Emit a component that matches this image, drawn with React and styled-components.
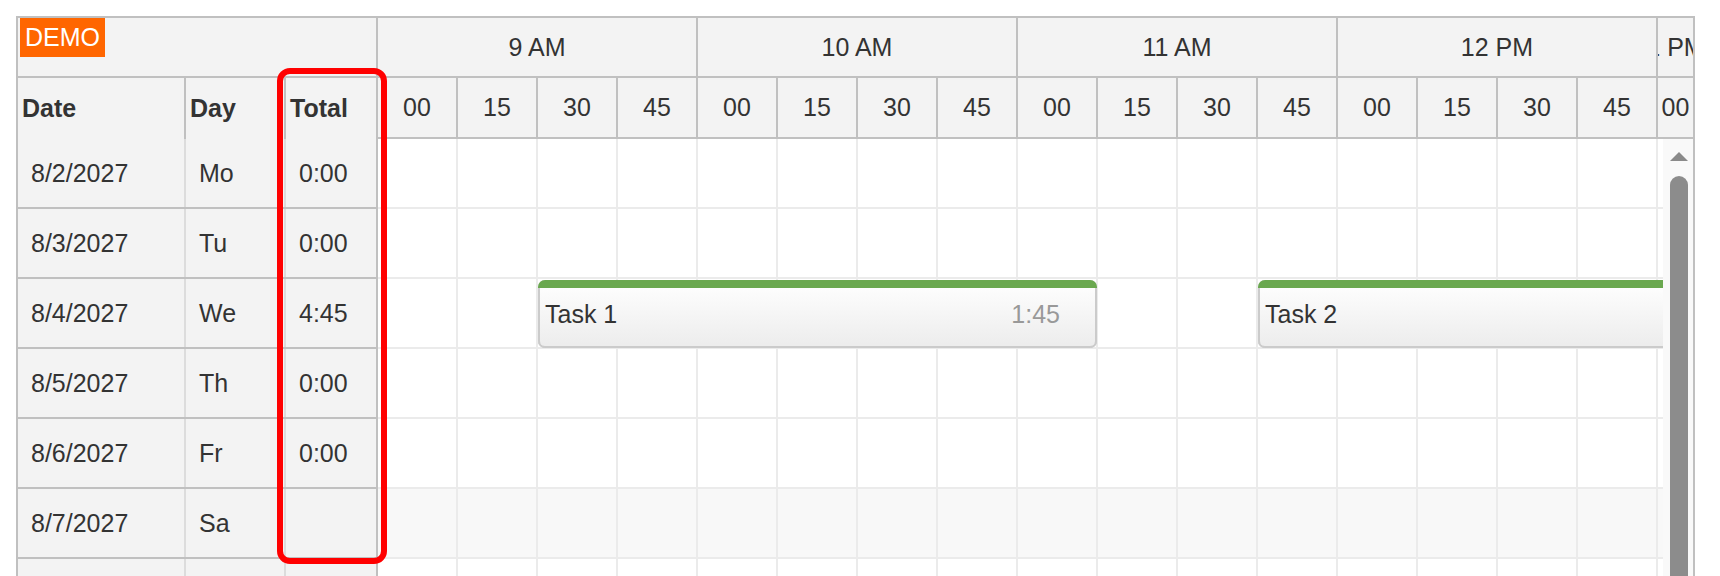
import React from 'react'
import styled, { createGlobalStyle } from 'styled-components'

const GlobalStyle = createGlobalStyle`
  html, body {
    margin: 0;
    padding: 0;
    overflow: hidden;
    background: #fff;
  }
  body {
    font-family: "Liberation Sans", Arial, sans-serif;
    color: #333;
  }
  #root {
    padding: 16px;
  }
`;

const CELL = 80;
const PX_PER_MIN = CELL / 15;

const Scheduler = styled.div`
  position: relative;
  box-sizing: border-box;
  width: 1679px;
  height: 640px;
  border: 2px solid #c0c0c0;
  display: grid;
  grid-template-columns: 360px 1fr;
  grid-template-rows: 121px 1fr;
  font-size: 25px;
  background: #fff;
  overflow: hidden;
`;

const Corner = styled.div`
  display: flex;
  flex-direction: column;
  background: #f3f3f3;
  border-right: 2px solid #c0c0c0;
`;

const CornerTop = styled.div`
  box-sizing: border-box;
  height: 60px;
  padding: 0 2px;
  border-bottom: 2px solid #c0c0c0;
`;

const Demo = styled.span`
  display: inline-block;
  height: 39px;
  line-height: 39px;
  padding: 0 5px;
  background: #ff6600;
  color: #fff;
`;

const ColumnHeads = styled.div`
  display: flex;
  flex: 1;
`;

const ColumnHead = styled.div`
  box-sizing: border-box;
  width: ${p => p.$w}px;
  display: flex;
  align-items: center;
  padding-left: 4px;
  font-weight: bold;
  border-right: ${p => (p.$last ? 'none' : '2px solid #c0c0c0')};
`;

const TimeHeader = styled.div`
  display: flex;
  flex-direction: column;
  background: #f3f3f3;
  overflow: hidden;
`;

const TimeRow = styled.div`
  display: flex;
  box-sizing: border-box;
  height: ${p => p.$h}px;
  border-bottom: 2px solid #c0c0c0;
`;

const TimeCell = styled.div`
  box-sizing: border-box;
  flex: ${p => (p.$fill ? '1 1 0' : `0 0 ${p.$w}px`)};
  min-width: 0;
  overflow: hidden;
  display: flex;
  align-items: center;
  justify-content: center;
  white-space: nowrap;
  border-right: ${p => (p.$fill ? 'none' : '2px solid #c0c0c0')};
`;

const RowHeaders = styled.div`
  display: flex;
  flex-direction: column;
  border-right: 2px solid #c0c0c0;
  background: #f3f3f3;
`;

const RowHeader = styled.div`
  display: flex;
  flex: 0 0 70px;
  box-sizing: border-box;
  border-bottom: 2px solid #c0c0c0;
`;

const RowCell = styled.div`
  box-sizing: border-box;
  width: ${p => p.$w}px;
  display: flex;
  align-items: center;
  padding-left: 13px;
  border-right: ${p => (p.$last ? 'none' : '2px solid #dcdcdc')};
`;

const BodyPane = styled.div`
  display: flex;
  min-width: 0;
`;

const Viewport = styled.div`
  flex: 1;
  min-width: 0;
  overflow: hidden;
`;

const GridRow = styled.div`
  position: relative;
  display: flex;
  width: max-content;
  height: 70px;
  box-sizing: border-box;
  border-bottom: 2px solid #ebebeb;
  background: ${p => (p.$weekend ? '#f8f8f8' : '#fff')};
`;

const GridCell = styled.div`
  flex: 0 0 ${CELL}px;
  box-sizing: border-box;
  border-right: 2px solid #ebebeb;
`;

const Event = styled.div`
  position: absolute;
  top: 1px;
  height: 68px;
  box-sizing: border-box;
  display: flex;
  align-items: center;
  justify-content: space-between;
  padding: 0 37px 0 7px;
  border-radius: 7px;
  overflow: hidden;
  white-space: nowrap;
  background: linear-gradient(#ffffff, #ececec);
  box-shadow: inset 2px 0 #cbcbcb, inset -2px 0 #cbcbcb, inset 0 -2px #cbcbcb;
  color: #333;

  &::after {
    content: '';
    position: absolute;
    top: 0;
    left: 0;
    right: 0;
    height: 8px;
    background: #6aa84f;
  }
`;

const Duration = styled.span`
  color: #999;
`;

const ScrollTrack = styled.div`
  flex: 0 0 30px;
  display: flex;
  flex-direction: column;
  align-items: center;
  gap: 15px;
  padding-top: 13px;
  background: #f9f9f9;
`;

const ArrowUp = styled.div`
  width: 0;
  height: 0;
  margin-left: 1px;
  border-left: 9px solid transparent;
  border-right: 9px solid transparent;
  border-bottom: 9px solid #8a8a8a;
`;

const Thumb = styled.div`
  width: 18px;
  height: 520px;
  margin-left: 1px;
  border-radius: 9px;
  background: #8c8c8c;
`;

const Highlight = styled.div`
  position: absolute;
  left: 259px;
  top: 50px;
  width: 110px;
  height: 496px;
  box-sizing: border-box;
  border: 6px solid #ff0000;
  border-radius: 13px;
  pointer-events: none;
  z-index: 5;
`;

const hours = ['9 AM', '10 AM', '11 AM', '12 PM', '1 PM'];
const minutes = ['00', '15', '30', '45'];

const days = [
  { date: '8/2/2027', day: 'Mo', total: '0:00' },
  { date: '8/3/2027', day: 'Tu', total: '0:00' },
  { date: '8/4/2027', day: 'We', total: '4:45' },
  { date: '8/5/2027', day: 'Th', total: '0:00' },
  { date: '8/6/2027', day: 'Fr', total: '0:00' },
  { date: '8/7/2027', day: 'Sa', total: '', weekend: true },
  { date: '8/8/2027', day: 'Su', total: '' },
  { date: '8/9/2027', day: 'Mo', total: '0:00' },
];

// start in minutes after 9 AM
const events = [
  { row: 2, text: 'Task 1', start: 30, length: 105, duration: '1:45' },
  { row: 2, text: 'Task 2', start: 165, length: 180, duration: '3:00' },
];

const slotCount = 24;

export default function App() {
  const subCells = [];
  hours.slice(0, 4).forEach(h => minutes.forEach(m => subCells.push(h + m)));

  return (
    <>
      <GlobalStyle />
      <Scheduler>
        <Corner>
          <CornerTop>
            <Demo>DEMO</Demo>
          </CornerTop>
          <ColumnHeads>
            <ColumnHead $w={168}>Date</ColumnHead>
            <ColumnHead $w={100}>Day</ColumnHead>
            <ColumnHead $w={90} $last>Total</ColumnHead>
          </ColumnHeads>
        </Corner>

        <TimeHeader>
          <TimeRow $h={60}>
            {hours.slice(0, 4).map(h => (
              <TimeCell key={h} $w={CELL * 4}>{h}</TimeCell>
            ))}
            <TimeCell $fill>{hours[4]}</TimeCell>
          </TimeRow>
          <TimeRow $h={61}>
            {subCells.map((k, i) => (
              <TimeCell key={k} $w={CELL}>{minutes[i % 4]}</TimeCell>
            ))}
            <TimeCell $fill>00</TimeCell>
          </TimeRow>
        </TimeHeader>

        <RowHeaders>
          {days.map(d => (
            <RowHeader key={d.date}>
              <RowCell $w={168}>{d.date}</RowCell>
              <RowCell $w={100}>{d.day}</RowCell>
              <RowCell $w={90} $last>{d.total}</RowCell>
            </RowHeader>
          ))}
        </RowHeaders>

        <BodyPane>
          <Viewport>
            {days.map((d, r) => (
              <GridRow key={d.date} $weekend={d.weekend}>
                {Array.from({ length: slotCount }, (_, i) => (
                  <GridCell key={i} />
                ))}
                {events
                  .filter(e => e.row === r)
                  .map(e => (
                    <Event
                      key={e.text}
                      style={{
                        left: e.start * PX_PER_MIN,
                        width: e.length * PX_PER_MIN - 1,
                      }}
                    >
                      <span>{e.text}</span>
                      <Duration>{e.duration}</Duration>
                    </Event>
                  ))}
              </GridRow>
            ))}
          </Viewport>
          <ScrollTrack>
            <ArrowUp />
            <Thumb />
          </ScrollTrack>
        </BodyPane>

        <Highlight />
      </Scheduler>
    </>
  );
}
